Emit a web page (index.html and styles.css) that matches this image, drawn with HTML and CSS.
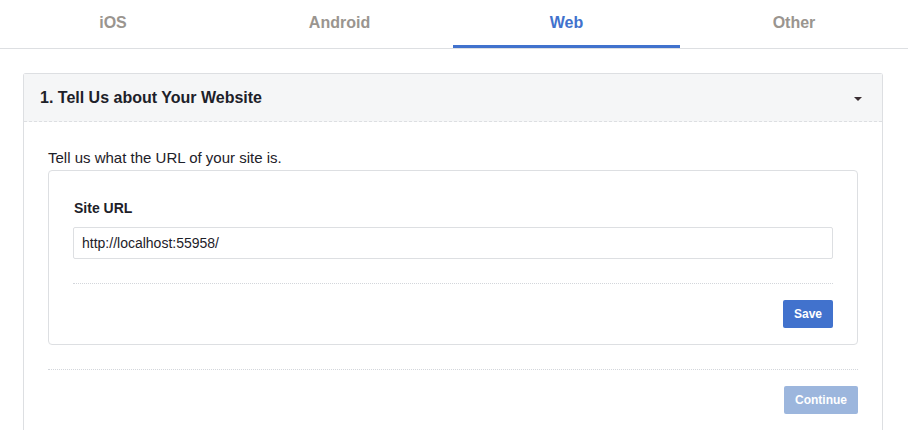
FILE: index.html
```html
<!DOCTYPE html>
<html lang="en">
<head>
<meta charset="utf-8">
<title>Web setup</title>
<link rel="stylesheet" href="styles.css">
</head>
<body>
<nav class="tabs">
  <div class="tab">iOS</div>
  <div class="tab">Android</div>
  <div class="tab active">Web</div>
  <div class="tab">Other</div>
</nav>
<main class="page">
  <section class="card">
    <header class="card-head">
      <h2 class="card-title">1. Tell Us about Your Website</h2>
      <span class="caret"></span>
    </header>
    <div class="card-body">
      <p class="intro">Tell us what the URL of your site is.</p>
      <div class="panel">
        <label class="label" for="url">Site URL</label>
        <input class="input" id="url" type="text" value="http://localhost:55958/">
        <div class="divider"></div>
        <div class="actions">
          <button class="btn">Save</button>
        </div>
      </div>
      <div class="divider outer"></div>
      <div class="actions">
        <button class="btn disabled">Continue</button>
      </div>
    </div>
  </section>
</main>
</body>
</html>
```
FILE: styles.css
```css
html, body {
  margin: 0;
  padding: 0;
  background: #fff;
  font-family: "Liberation Sans", Arial, Helvetica, sans-serif;
  color: #1d2129;
}

.tabs {
  display: grid;
  grid-template-columns: 226px 227px 227px 1fr;
  border-bottom: 1px solid #dddfe2;
}

.tab {
  box-sizing: border-box;
  height: 48px;
  border-bottom: 3px solid transparent;
  display: flex;
  align-items: center;
  justify-content: center;
  font-size: 16px;
  font-weight: bold;
  color: #9a958f;
}

.tab.active {
  color: #4172cd;
  border-bottom-color: #4172cd;
}

.page {
  padding: 24px 25px 0 23px;
}

.card {
  border: 1px solid #dddfe2;
  border-bottom: none;
  border-radius: 3px 3px 0 0;
}

.card-head {
  height: 47px;
  background: #f5f6f7;
  border-bottom: 1px dashed #dddfe2;
  display: flex;
  align-items: center;
  justify-content: space-between;
  padding: 0 20px 0 16px;
}

.card-title {
  margin: 0;
  font-size: 16px;
  font-weight: bold;
  color: #1d2129;
}

.caret {
  width: 0;
  height: 0;
  border-left: 4px solid transparent;
  border-right: 4px solid transparent;
  border-top: 4px solid #3b2f33;
  margin-top: 2px;
}

.card-body {
  padding: 26px 24px 16px 24px;
}

.intro {
  margin: 0 0 2px 0;
  font-size: 15px;
  line-height: 20px;
  color: #1d2129;
}

.panel {
  border: 1px solid #dddfe2;
  border-radius: 4px;
  padding: 28px 24px 16px 24px;
}

.label {
  display: block;
  font-size: 14px;
  font-weight: bold;
  line-height: 18px;
  margin-bottom: 10px;
  padding-left: 1px;
  color: #1d2129;
}

.input {
  display: block;
  width: 100%;
  box-sizing: border-box;
  height: 32px;
  border: 1px solid #dddfe2;
  border-radius: 2px;
  padding: 0 8px;
  font-family: "Liberation Sans", Arial, sans-serif;
  font-size: 14px;
  color: #1d2129;
  background: #fff;
}

.divider {
  border-top: 1px dotted #d3d6db;
  margin: 24px 0 16px 0;
}

.actions {
  display: flex;
  justify-content: flex-end;
}

.btn {
  height: 28px;
  padding: 0 11px;
  border: none;
  border-radius: 2px;
  background: #4172cd;
  color: #fff;
  font-family: "Liberation Sans", Arial, sans-serif;
  font-size: 12px;
  font-weight: bold;
}

.btn.disabled {
  background: #9cb6dd;
}
```
